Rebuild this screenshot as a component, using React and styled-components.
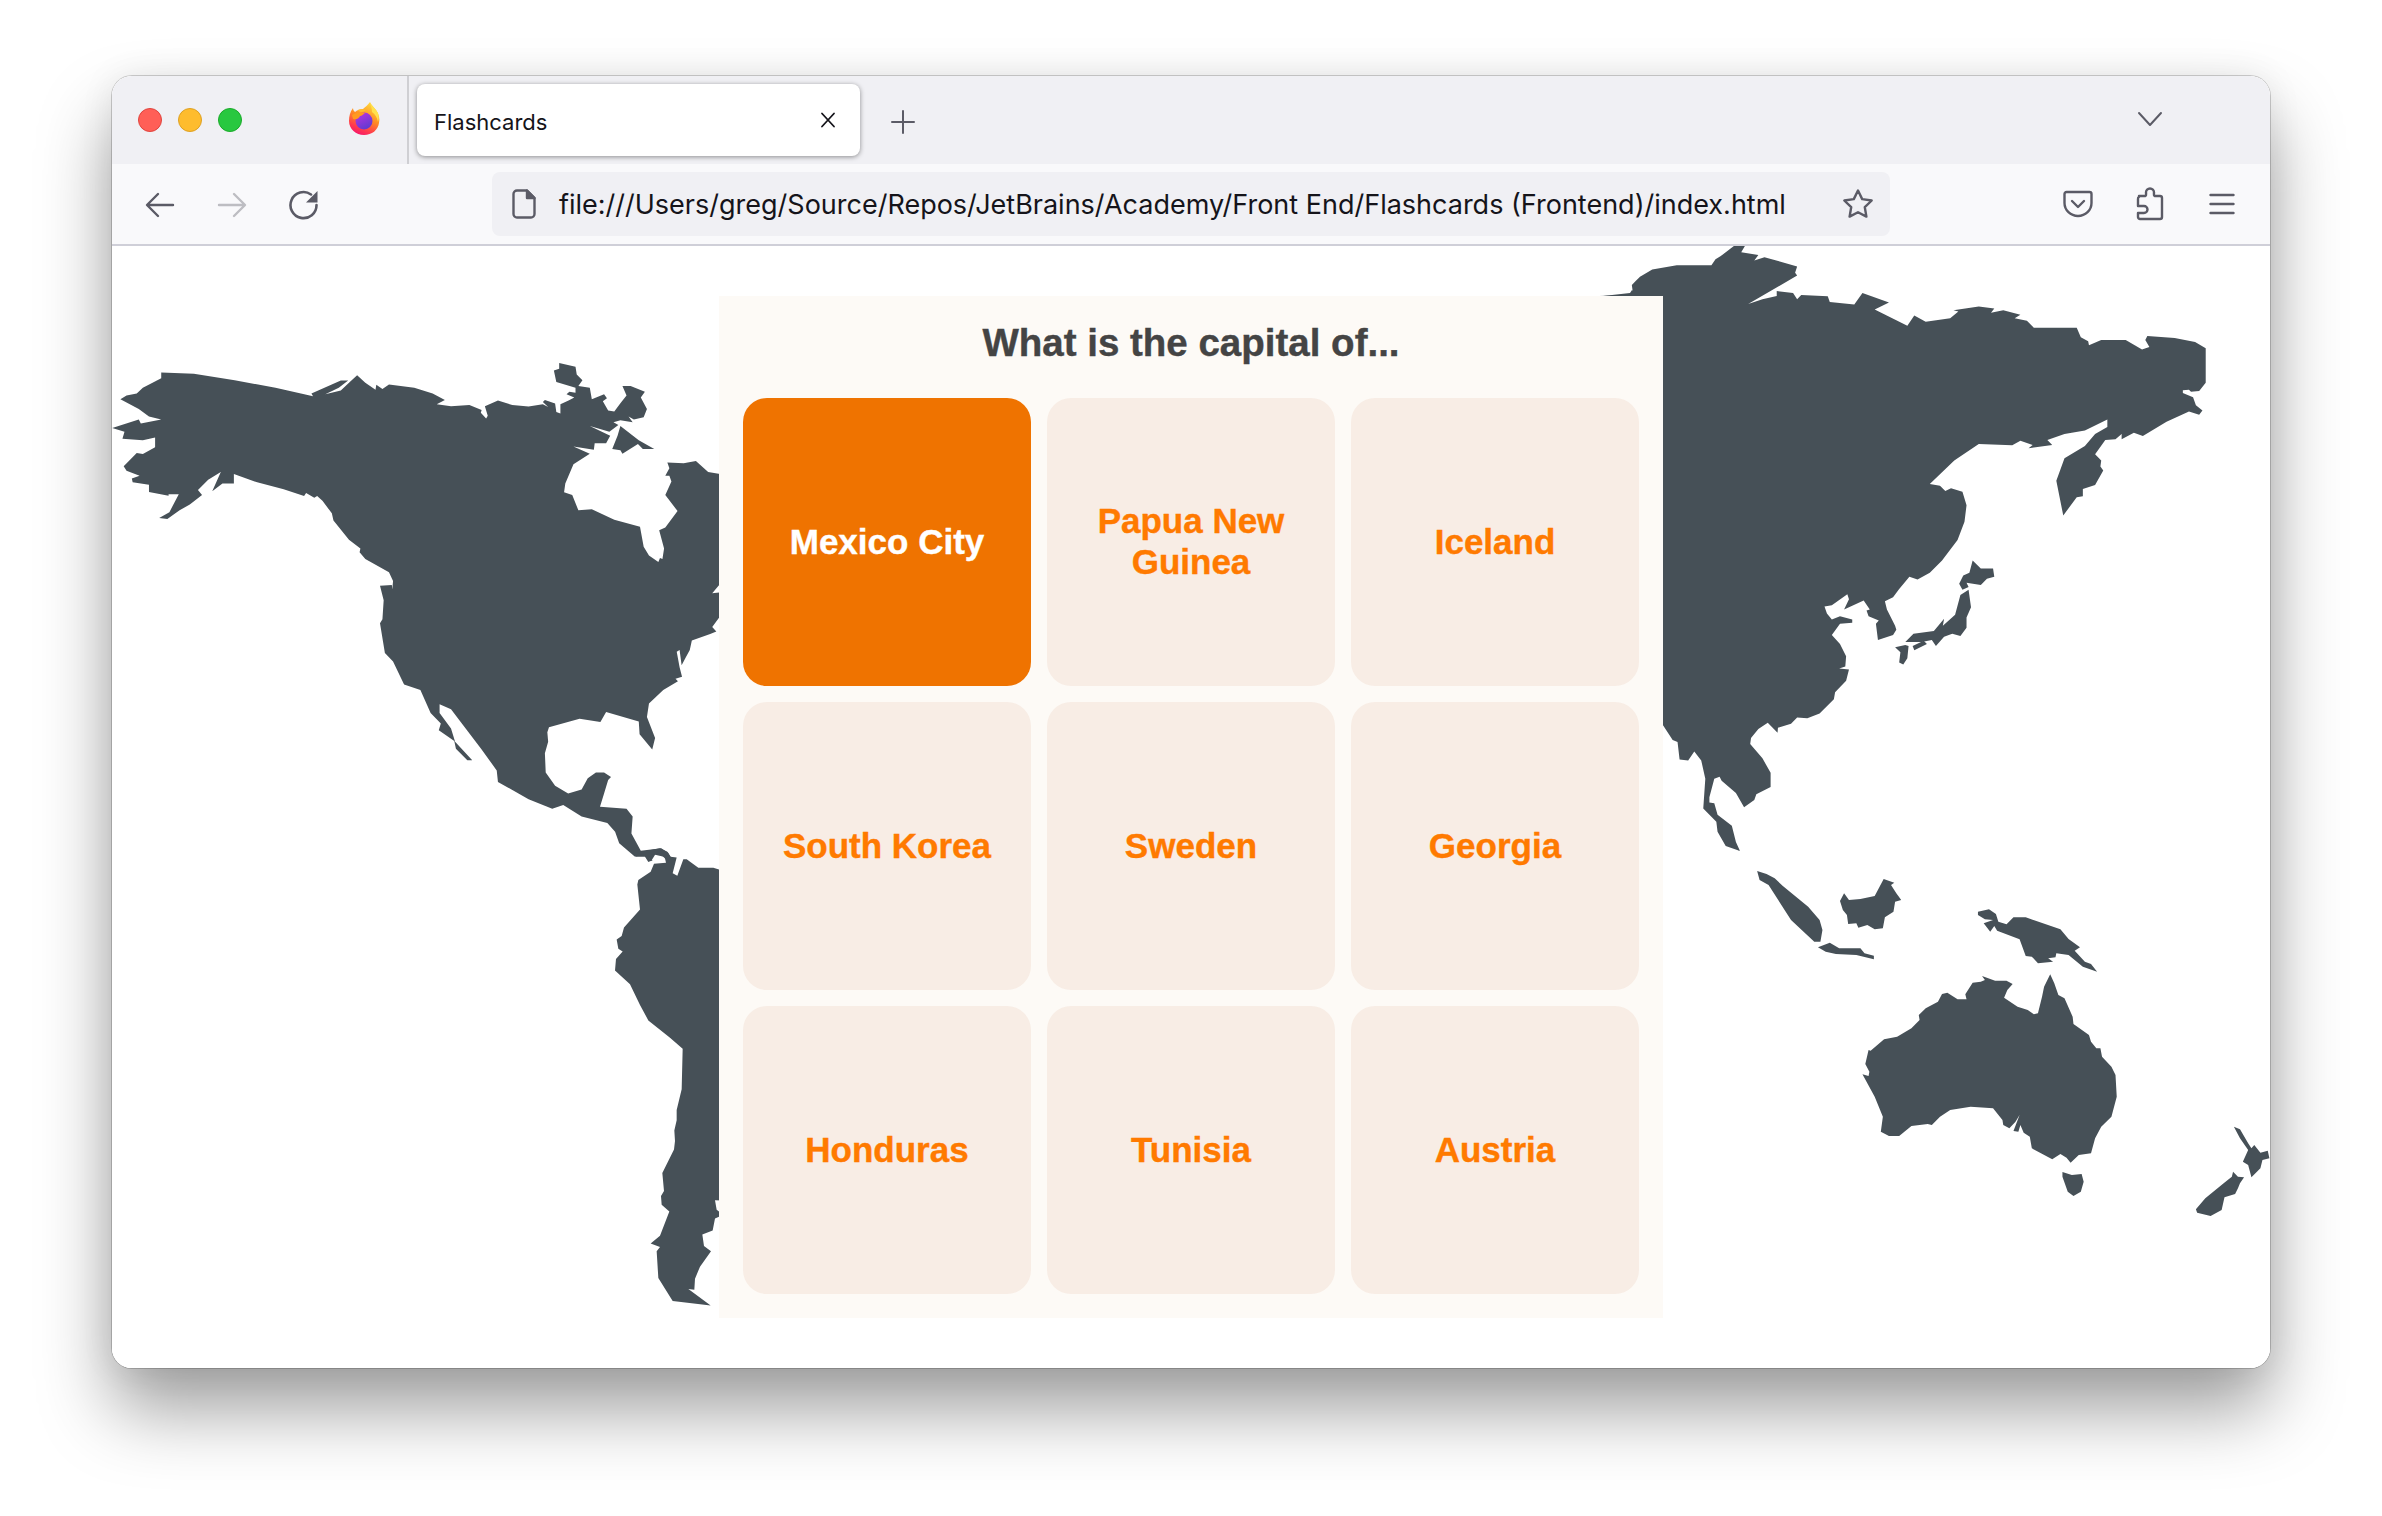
import React from "react";
import styled, { createGlobalStyle } from "styled-components";

const Global = createGlobalStyle`
  html, body { margin: 0; padding: 0; background: #fff; }
  #root { width: 2382px; height: 1516px; overflow: hidden; }
`;

const Stage = styled.div`
  width: 2382px;
  height: 1516px;
  padding: 76px 112px 148px;
  box-sizing: border-box;
  background: #fff;
`;

const BrowserWindow = styled.div`
  height: 1292px;
  border-radius: 20px;
  overflow: hidden;
  display: flex;
  flex-direction: column;
  background: #fff;
`;

const WindowShadow = styled.div`
  border-radius: 20px;
  box-shadow: 0 0 0 1px rgba(0, 0, 0, 0.18), 0 42px 72px rgba(0, 0, 0, 0.38), 0 0 36px rgba(0, 0, 0, 0.07);
`;

const TitleBar = styled.div`
  height: 88px;
  flex: none;
  background: #f0f0f4;
  display: flex;
  align-items: stretch;
`;

const Lights = styled.div`
  width: 297px;
  flex: none;
  box-sizing: border-box;
  padding-left: 26px;
  display: flex;
  align-items: center;
  gap: 16px;
  border-right: 2px solid #cfcfd3;
`;

const Light = styled.span`
  width: 24px;
  height: 24px;
  border-radius: 50%;
  margin-top: -1px;
  box-sizing: border-box;
  background: ${(p) => p.$color};
  border: 1px solid ${(p) => p.$edge};
`;

const FoxWrap = styled.span`
  margin-left: 90px;
  display: flex;
  margin-top: -2px;
`;

const Tab = styled.div`
  width: 443px;
  height: 72px;
  margin: 8px 0 0 8px;
  box-sizing: border-box;
  padding: 0 23px 0 17px;
  background: #fff;
  border-radius: 8px;
  box-shadow: 0 1px 5px rgba(0, 0, 0, 0.42);
  display: flex;
  align-items: center;
  justify-content: space-between;
  font-family: Inter, "Liberation Sans", sans-serif;
  font-size: 22px;
  color: #15141a;
`;

const TabLabel = styled.span`
  padding-top: 3px;
`;

const TitleIcon = styled.span`
  display: flex;
  align-items: center;
  justify-content: center;
  flex: none;
  margin: ${(p) => p.$margin};
`;

const Spacer = styled.div`
  flex: 1;
`;

const Toolbar = styled.div`
  height: 82px;
  flex: none;
  box-sizing: border-box;
  background: #f9f9fb;
  border-bottom: 2px solid #cfcfd8;
  display: flex;
  align-items: center;
  padding: 0 28px 0 24px;
`;

const ToolIcon = styled.span`
  width: 48px;
  height: 48px;
  flex: none;
  display: flex;
  align-items: center;
  justify-content: center;
  margin-right: ${(p) => p.$gap || 0}px;
`;

const NavIcon = styled(ToolIcon)`
  padding-top: 2px;
  box-sizing: content-box;
`;

const UrlBar = styled.div`
  width: 1398px;
  height: 64px;
  flex: none;
  box-sizing: border-box;
  background: #f0f0f4;
  border-radius: 8px;
  display: flex;
  align-items: center;
  padding: 0 8px 0 20px;
  margin-right: 164px;
  font-family: Inter, "Liberation Sans", sans-serif;
  font-size: 27px;
  color: #15141a;
`;

const UrlText = styled.span`
  flex: 1;
  margin-left: 23px;
  white-space: nowrap;
`;

const Content = styled.main`
  flex: 1;
  position: relative;
  background: #fff;
  display: flex;
  justify-content: center;
  align-items: flex-start;
  padding-top: 50px;
  overflow: hidden;
`;

const MapArt = styled.svg`
  position: absolute;
  left: 0;
  top: 0;
  width: 2158px;
  height: 1122px;
`;

const Panel = styled.section`
  position: relative;
  width: 944px;
  height: 1022px;
  box-sizing: border-box;
  padding: 0 24px 24px;
  background: #fdfaf6;
  display: flex;
  flex-direction: column;
`;

const Heading = styled.h1`
  margin: 0;
  height: 102px;
  display: flex;
  align-items: center;
  justify-content: center;
  font-family: "Liberation Sans", Arial, sans-serif;
  font-size: 38.5px;
  font-weight: 700;
  -webkit-text-stroke: 0.4px #444444;
  color: #444444;
  padding-bottom: 8px;
  box-sizing: border-box;
`;

const Grid = styled.div`
  display: grid;
  grid-template-columns: repeat(3, 288px);
  grid-auto-rows: 288px;
  gap: 16px;
`;

const Card = styled.button`
  border: 0;
  padding: 0 30px 2px;
  border-radius: 24px;
  background: ${(p) => (p.$active ? "#ef7300" : "#f8ede5")};
  color: ${(p) => (p.$active ? "#ffffff" : "#ff7a00")};
  -webkit-text-stroke: 0.4px ${(p) => (p.$active ? "#ffffff" : "#ff7a00")};
  font-family: "Liberation Sans", Arial, sans-serif;
  font-size: 35px;
  font-weight: 700;
  line-height: 41px;
  text-align: center;
`;

const Stroke = ({ w, h, vb, children, color = "#5b5b66", sw = 2 }) => (
  <svg width={w} height={h} viewBox={vb} fill="none" stroke={color} strokeWidth={sw} strokeLinecap="round" strokeLinejoin="round">
    {children}
  </svg>
);

const Firefox = () => (
  <svg width="32" height="34" viewBox="0 0 32 34">
    <defs>
      <linearGradient id="fxa" x1="0.7" y1="0.05" x2="0.3" y2="1">
        <stop offset="0" stopColor="#ffd43b" />
        <stop offset="0.45" stopColor="#ff8a24" />
        <stop offset="0.8" stopColor="#ff3750" />
        <stop offset="1" stopColor="#f5156c" />
      </linearGradient>
      <linearGradient id="fxb" x1="0.2" y1="0" x2="0.7" y2="1">
        <stop offset="0" stopColor="#b833e1" />
        <stop offset="1" stopColor="#5b3bd0" />
      </linearGradient>
    </defs>
    <path d="M22 0c1 3 4 5 6 8 3 4 4 9 3 13-1 7-7 12-15 12C8 33 1 27 1 19c0-5 1-9 4-13 0 2 1 3 2 4 2-2 5-3 8-3 2-2 5-4 7-7z" fill="url(#fxa)" />
    <path d="M22 1c2 3 6 6 8 10 1 3 1 6 0 9-1-5-3-8-6-10 0-3-1-6-2-9z" fill="#ffe14d" />
    <circle cx="16" cy="19" r="8.5" fill="url(#fxb)" />
    <path d="M4 13c3-2 7-3 13-2 -2 1-3 3-5 3-1 2-3 4-7 3 0-1-1-3-1-4z" fill="#ff9a1f" />
    <path d="M10 8c2-1 5-1 8 0-1 1-3 2-5 2-1 0-2-1-3-2z" fill="#ffbd2e" />
  </svg>
);

const NA = "150,85 230,88 330,105 430,125 522,147 518,140 590,106 608,106 585,125 552,142 590,132 612,110 630,92 650,112 675,130 677,117 692,128 708,116 770,125 815,140 845,157 825,168 860,173 905,170 935,183 933,190 946,205 950,198 943,173 975,158 1010,170 1050,174 1085,168 1098,175 1085,162 1090,157 1115,166 1118,188 1128,192 1128,168 1148,158 1162,150 1143,142 1150,135 1165,138 1165,125 1118,110 1112,80 1125,75 1125,60 1165,70 1168,90 1182,105 1172,120 1200,125 1205,155 1235,142 1242,152 1232,160 1245,184 1260,187 1275,165 1290,145 1280,120 1300,120 1335,135 1325,150 1340,180 1332,202 1308,208 1295,200 1305,215 1275,210 1258,215 1270,222 1248,240 1200,225 1250,250 1240,270 1212,270 1210,287 1160,278 1200,297 1160,325 1140,375 1137,398 1157,405 1172,445 1205,442 1260,470 1323,488 1332,540 1345,563 1368,580 1372,570 1378,572 1382,545 1370,497 1385,490 1415,447 1385,405 1400,370 1395,355 1385,355 1395,335 1390,320 1430,322 1460,316 1490,345 1530,352 1600,352 1600,635 1517,640 1500,662 1517,660 1600,680 1600,725 1517,725 1500,750 1510,762 1495,768 1450,785 1445,810 1435,830 1425,850 1420,810 1413,815 1420,855 1426,880 1410,885 1416,892 1380,915 1345,950 1340,985 1360,1040 1353,1070 1322,1030 1320,997 1240,972 1226,998 1175,990 1100,1012 1096,1025 1098,1050 1090,1080 1092,1130 1115,1165 1147,1185 1180,1175 1195,1145 1215,1130 1235,1130 1252,1142 1245,1150 1235,1185 1225,1220 1290,1225 1305,1245 1302,1290 1325,1335 1375,1328 1392,1340 1400,1355 1360,1345 1350,1362 1340,1345 1310,1350 1272,1315 1262,1285 1243,1262 1180,1245 1135,1215 1108,1225 1050,1200 975,1155 972,1125 935,1070 860,965 832,952 832,975 860,1015 870,1050 912,1098 900,1098 872,1068 868,1048 830,1020 835,1002 810,975 785,915 745,900 718,840 698,818 686,740 692,730 695,680 686,642 715,640 716,652 718,630 708,607 650,572 636,555 638,545 610,522 572,472 568,453 545,420 532,408 525,412 505,400 500,408 450,390 385,372 328,350 328,375 300,375 275,395 296,345 265,365 240,392 250,405 220,430 195,445 165,468 145,465 170,450 193,403 168,403 168,407 120,397 120,378 80,372 78,362 97,355 65,342 58,330 90,295 105,298 135,280 135,255 105,262 55,258 60,240 30,230 95,208 100,218 150,208 120,200 95,180 50,155 65,145 90,140 105,125 150,100";
const BAFFIN = "1275,225 1320,262 1358,285 1330,285 1318,272 1280,297 1275,288 1255,285 1268,250";

const SA = "165,165 185,150 240,140 262,150 272,165 290,167 278,213 292,220 310,172 320,172 355,197 400,197 417,202 500,202 500,1165 405,1162 410,1190 417,1195 417,1210 405,1215 398,1250 367,1262 372,1295 393,1310 360,1355 345,1390 343,1422 325,1420 392,1468 278,1455 235,1388 230,1310 240,1298 212,1288 240,1265 268,1195 245,1175 243,1150 252,1135 247,1083 282,1015 285,990 283,960 290,930 290,900 305,840 308,722 270,690 205,640 180,595 150,535 105,495 108,462 128,440 115,432 110,405 125,395 132,370 180,318 172,245 175,232 212,208 222,185 258,182 255,170 240,155 215,160 207,168 218,175 205,180 195,165";

const ASIA = "-20,110 -10,100 0,90 30,72 90,62 175,62 185,47 197,40 230,15 257,15 248,30 290,37 280,50 305,42 385,65 380,80 385,87 265,157 300,145 335,137 335,125 375,130 385,145 395,135 460,138 465,152 525,158 545,130 610,153 575,170 655,210 672,185 700,200 760,192 780,175 768,172 830,163 868,168 860,178 890,172 932,183 918,192 948,198 965,215 1070,215 1080,238 1098,248 1100,258 1130,245 1190,245 1230,268 1248,262 1238,245 1243,235 1310,240 1360,250 1386,265 1386,350 1370,370 1350,372 1345,367 1330,368 1330,375 1355,385 1362,405 1378,418 1370,428 1345,420 1290,445 1232,480 1210,472 1180,488 1180,475 1165,488 1140,490 1115,525 1130,540 1128,555 1135,565 1115,600 1085,610 1085,628 1070,630 1037,675 1020,590 1040,535 1090,505 1115,475 1145,458 1145,440 1090,467 1040,475 998,490 1010,502 952,510 962,502 932,492 912,503 830,500 770,540 710,598 735,602 748,615 762,608 790,617 800,650 795,690 778,735 740,785 710,815 680,832 660,825 635,855 620,875 600,885 605,905 625,945 628,955 620,968 583,980 578,940 585,932 560,922 555,908 563,905 548,883 500,905 512,880 508,868 470,895 452,898 458,915 470,930 490,922 520,930 520,938 490,940 470,968 490,990 505,1020 503,1045 488,1050 512,1052 505,1080 478,1108 475,1125 440,1160 410,1172 385,1170 370,1185 338,1195 337,1207 313,1183 290,1198 272,1220 270,1235 300,1270 320,1305 320,1340 285,1358 280,1372 255,1390 235,1355 200,1325 195,1315 182,1320 170,1365 170,1378 182,1380 190,1408 225,1435 235,1475 245,1497 210,1485 190,1450 187,1425 155,1393 160,1320 150,1275 133,1253 118,1275 97,1273 92,1230 80,1225 56,1188 -200,1188 -200,140 -20,135 -18,125";
const JAPAN = [
  "815,785 835,805 865,805 868,825 850,830 835,845 800,840 805,850 790,857 782,842 792,822 807,815",
  "805,857 811,900 800,925 800,950 785,970 765,965 745,972 725,995 715,980 690,985 650,985 670,965 720,958 745,928 742,945 772,918 785,870",
  "625,998 650,992 658,995 655,1025 645,1040 635,1035 638,1010",
  "668,995 695,982 703,990 672,1005",
];

const OCEANIA = [
  "287,93 310,102 330,115 350,138 412,200 440,240 447,270 442,305 427,305 370,240 315,135 293,120",
  "436,322 465,308 488,325 540,325 550,340 573,347 573,358 530,345 480,342 455,335",
  "500,160 512,180 540,177 575,168 597,117 623,128 615,135 628,160 640,180 625,185 621,215 600,232 595,265 575,268 557,255 535,263 530,250 510,252 507,225 497,210 490,183",
  "828,215 855,208 872,222 878,245 898,253 915,232 945,232 1030,268 1050,297 1078,322 1065,332 1090,365 1105,372 1120,395 1085,380 1050,345 1020,340 1018,352 1000,355 1012,365 975,370 960,350 945,348 930,298 875,272 868,258 858,275 842,250 865,240 845,238 828,225",
  "838,408 870,422 898,422 913,432 900,450 892,473 925,500 950,510 965,523 975,520 985,470 990,440 1005,403 1015,430 1025,465 1040,475 1060,530 1062,552 1100,585 1105,605 1118,625 1128,625 1132,650 1155,680 1165,705 1168,770 1155,830 1130,860 1115,895 1105,940 1075,945 1055,968 1045,953 1030,942 1010,958 960,925 955,890 940,878 932,855 927,875 915,873 930,825 920,845 905,865 890,855 888,840 865,805 810,800 760,810 735,830 715,855 705,852 665,858 635,888 610,888 590,875 595,830 575,770 545,703 560,708 562,695 552,672 560,630 565,632 598,598 630,590 665,565 685,540 683,525 700,505 730,485 740,462 753,458 778,478 800,478 797,463 815,428 835,425 845,420",
  "1035,996 1058,1005 1082,1002 1087,1025 1080,1055 1062,1068 1048,1055 1035,1010",
  "1455,860 1470,868 1490,910 1498,925 1505,915 1520,938 1538,932 1542,955 1525,960 1520,985 1498,1012 1490,975 1477,965 1490,930 1470,895",
  "1453,995 1465,1010 1480,1012 1470,1030 1465,1045 1458,1062 1432,1072 1425,1110 1398,1128 1365,1118 1362,1108 1385,1075 1430,1030 1450,1010",
];

const WorldMap = () => (
  <MapArt viewBox="112 246 2158 1122" fill="#465057">
    <g transform="translate(100 340) scale(0.40816 0.38265)">
      <polygon points={NA} />
      <polygon points={BAFFIN} />
    </g>
    <g transform="translate(580 800) scale(0.33333 0.34439)">
      <polygon points={SA} />
    </g>
    <polygon points="1603,296 1630,293 1632,290 1640,296" />
    <g transform="translate(1640 240) scale(0.40816 0.40816)">
      <polygon points={ASIA} />
      {JAPAN.map((p) => <polygon key={p} points={p} />)}
    </g>
    <g transform="translate(1640 840) scale(0.40816 0.33333)">
      {OCEANIA.map((p) => <polygon key={p} points={p} />)}
    </g>
  </MapArt>
);

const ANSWERS = ["Mexico City", "Papua New Guinea", "Iceland", "South Korea", "Sweden", "Georgia", "Honduras", "Tunisia", "Austria"];

export default function App() {
  return (
    <>
      <Global />
      <Stage>
        <WindowShadow>
          <BrowserWindow>
            <TitleBar>
              <Lights>
                <Light $color="#ff5f57" $edge="#e0443e" />
                <Light $color="#febc2e" $edge="#dea123" />
                <Light $color="#28c840" $edge="#1aab29" />
                <FoxWrap><Firefox /></FoxWrap>
              </Lights>
              <Tab>
                <TabLabel>Flashcards</TabLabel>
                <Stroke w={18} h={18} vb="0 0 18 18" color="#15141a" sw={1.8}>
                  <path d="M3 2.5l12 13M15 2.5l-12 13" />
                </Stroke>
              </Tab>
              <TitleIcon $margin="4px 0 0 31px">
                <Stroke w={24} h={24} vb="0 0 24 24" sw={2}>
                  <path d="M12 1v22M1 12h22" />
                </Stroke>
              </TitleIcon>
              <Spacer />
              <TitleIcon $margin="-2px 107px 0 0">
                <Stroke w={26} h={16} vb="0 0 26 16" sw={2}>
                  <path d="M2 2l11 12L24 2" />
                </Stroke>
              </TitleIcon>
            </TitleBar>
            <Toolbar>
              <NavIcon $gap={24}>
                <Stroke w={30} h={26} vb="0 0 30 26" sw={2.4}>
                  <path d="M28 13H3M13 2L2 13l11 11" />
                </Stroke>
              </NavIcon>
              <NavIcon $gap={24}>
                <Stroke w={30} h={26} vb="0 0 30 26" sw={2.4} color="#bdbdc2">
                  <path d="M2 13h25M17 2l11 11-11 11" />
                </Stroke>
              </NavIcon>
              <NavIcon $gap={164}>
                <svg width="30" height="30" viewBox="0 0 30 30" fill="none">
                  <path d="M27.5 15A13 13 0 1 1 22 4.5" stroke="#5b5b66" strokeWidth="2.6" strokeLinecap="round" />
                  <path d="M28.5 1v11.5H17z" fill="#5b5b66" />
                </svg>
              </NavIcon>
              <UrlBar>
                <Stroke w={24} h={30} vb="0 0 24 30" sw={2.4}>
                  <path d="M15 1.5H5A3.5 3.5 0 0 0 1.5 5v20A3.5 3.5 0 0 0 5 28.5h14a3.5 3.5 0 0 0 3.5-3.5V9z" />
                  <path d="M15 1.5V9h7.5z" fill="#5b5b66" />
                </Stroke>
                <UrlText>file:///Users/greg/Source/Repos/JetBrains/Academy/Front End/Flashcards (Frontend)/index.html</UrlText>
                <ToolIcon>
                  <Stroke w={32} h={32} vb="0 0 32 32" sw={2.4}>
                    <path d="M16 2.5l4.2 8.6 9.5 1.4-6.9 6.7 1.6 9.4L16 24.2l-8.4 4.400 1.600-9.400-6.900-6.700 9.500-1.400z" />
                  </Stroke>
                </ToolIcon>
              </UrlBar>
              <ToolIcon $gap={24}>
                <Stroke w={30} h={28} vb="0 0 30 28" sw={2.4}>
                  <path d="M3.500 2h23A2 2 0 0 1 28.500 4v9a13.500 13 0 0 1-27 0V4a2 2 0 0 1 2-2z" />
                  <path d="M9 11l6 6 6-6" />
                </Stroke>
              </ToolIcon>
              <ToolIcon $gap={24}>
                <Stroke w={28} h={34} vb="0 0 28 34" sw={2.4}>
                  <path d="M3 9h6.500c1-1 .5-2 .5-3.500a4 4 0 0 1 8 0c0 1.500-.5 2.500.5 3.500H24a2 2 0 0 1 2 2v19a2 2 0 0 1-2 2H4a2 2 0 0 1-2-2v-4h6a3.500 3.500 0 0 0 0-7H2v-7a2 2 0 0 1 1-2z" />
                </Stroke>
              </ToolIcon>
              <ToolIcon>
                <Stroke w={26} h={22} vb="0 0 26 22" sw={2.4}>
                  <path d="M1.500 2h23M1.500 11h23M1.500 20h23" />
                </Stroke>
              </ToolIcon>
            </Toolbar>
            <Content>
              <WorldMap />
              <Panel>
                <Heading>What is the capital of...</Heading>
                <Grid>
                  {ANSWERS.map((a, i) => (
                    <Card key={a} $active={i === 0}>{a}</Card>
                  ))}
                </Grid>
              </Panel>
            </Content>
          </BrowserWindow>
        </WindowShadow>
      </Stage>
    </>
  );
}
